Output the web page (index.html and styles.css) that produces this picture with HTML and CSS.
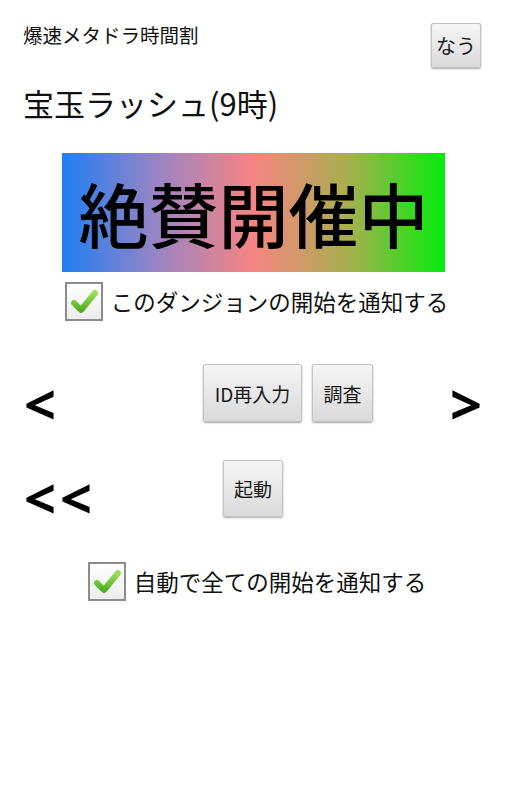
FILE: index.html
```html
<!DOCTYPE html>
<html lang="ja">
<head>
<meta charset="utf-8">
<title>爆速メタドラ時間割</title>
<link rel="stylesheet" href="styles.css">
</head>
<body>
<div class="page">
  <div class="header">
    <div class="title">爆速メタドラ時間割</div>
    <div class="btn btn-now">なう</div>
  </div>
  <div class="subtitle">宝玉ラッシュ(9時)</div>
  <div class="banner-wrap">
    <div class="banner">絶賛開催中</div>
  </div>
  <div class="check-row check-row-1">
    <span class="checkbox">
      <svg width="38" height="39" viewBox="0 0 38 39">
        <defs>
          <linearGradient id="bx" x1="0" y1="0" x2="0" y2="1">
            <stop offset="0" stop-color="#ffffff"/>
            <stop offset="1" stop-color="#ececec"/>
          </linearGradient>
          <linearGradient id="ck" x1="0" y1="0" x2="0" y2="1">
            <stop offset="0" stop-color="#9be05a"/>
            <stop offset="1" stop-color="#4fae22"/>
          </linearGradient>
        </defs>
        <rect x="1" y="1" width="36" height="37" fill="url(#bx)" stroke="#8c8c8c" stroke-width="2"/>
        <path d="M9 21 L16 28 L30 11" fill="none" stroke="url(#ck)" stroke-width="6" stroke-linecap="round" stroke-linejoin="round"/>
      </svg>
    </span>
    <span class="check-label">このダンジョンの開始を通知する</span>
  </div>
  <div class="nav-row">
    <div class="arrow arrow-left">&lt;</div>
    <div class="btn-group">
      <div class="btn btn-id">ID再入力</div>
      <div class="btn btn-search">調査</div>
    </div>
    <div class="arrow arrow-right">&gt;</div>
  </div>
  <div class="nav-row nav-row-2">
    <div class="arrow arrow-double">&lt;&lt;</div>
    <div class="btn btn-start">起動</div>
  </div>
  <div class="check-row check-row-2">
    <span class="checkbox">
      <svg width="38" height="39" viewBox="0 0 38 39">
        <rect x="1" y="1" width="36" height="37" fill="url(#bx)" stroke="#8c8c8c" stroke-width="2"/>
        <path d="M9 21 L16 28 L30 11" fill="none" stroke="url(#ck)" stroke-width="6" stroke-linecap="round" stroke-linejoin="round"/>
      </svg>
    </span>
    <span class="check-label">自動で全ての開始を通知する</span>
  </div>
</div>
</body>
</html>
```

FILE: styles.css
```css
html, body {
  margin: 0;
  padding: 0;
  background: #ffffff;
}

body {
  font-family: "Noto Sans CJK JP", "Noto Sans", sans-serif;
  color: #111111;
  width: 507px;
  height: 800px;
  overflow: hidden;
}

.page {
  display: flex;
  flex-direction: column;
}

.header {
  display: flex;
  justify-content: space-between;
  align-items: flex-start;
  padding: 23px 26px 0 23px;
  height: 45px;
}

.title {
  font-size: 19.5px;
  line-height: 1;
  margin-top: 2px;
}

.btn {
  display: flex;
  align-items: center;
  justify-content: center;
  box-sizing: border-box;
  background: linear-gradient(#f5f5f5, #dadada);
  border: 1px solid #c2c2c2;
  border-radius: 2px;
  box-shadow: 0 1px 2px rgba(0, 0, 0, 0.35);
  color: #1a1a1a;
  line-height: 1;
}

.btn-now {
  width: 50px;
  height: 45px;
  font-size: 20px;
}

.subtitle {
  font-size: 31px;
  line-height: 1;
  margin: 19px 0 0 23px;
}

.banner-wrap {
  display: flex;
  justify-content: center;
  margin-top: 35px;
}

.banner {
  width: 383px;
  height: 119px;
  display: flex;
  align-items: center;
  justify-content: center;
  background: linear-gradient(to right, #1f7ff2 0%, #9a84c4 25%, #f68482 50%, #a6b04e 75%, #04ec0c 100%);
  font-size: 70px;
  font-weight: 500;
  line-height: 1;
  color: #000000;
}

.check-row {
  display: flex;
  align-items: center;
  justify-content: center;
  gap: 8px;
}

.check-row-1 {
  margin-top: 10px;
  padding-left: 6px;
}

.checkbox {
  display: block;
  width: 38px;
  height: 39px;
}

.checkbox svg {
  display: block;
}

.check-label {
  font-size: 22.5px;
  line-height: 1;
}

.nav-row {
  display: flex;
  align-items: flex-start;
  margin-top: 43px;
  padding-left: 24px;
  height: 58px;
}

.arrow {
  font-family: "Open Sans", "DejaVu Sans", sans-serif;
  font-weight: 700;
  font-size: 56px;
  line-height: 1;
  color: #000000;
  margin-top: 11px;
}

.arrow-left {
  width: 179px;
}

.btn-group {
  display: flex;
  gap: 10px;
}

.btn-id {
  width: 99px;
  height: 58px;
  font-size: 19px;
}

.btn-search {
  width: 61px;
  height: 58px;
  font-size: 19px;
}

.arrow-right {
  margin-left: 77px;
}

.nav-row-2 {
  margin-top: 38px;
  height: 57px;
}

.arrow-double {
  margin-top: 9px;
  width: 199px;
  letter-spacing: 4px;
}

.btn-start {
  width: 60px;
  height: 57px;
  font-size: 19px;
}

.check-row-2 {
  margin-top: 45px;
  padding-left: 7px;
}
```
